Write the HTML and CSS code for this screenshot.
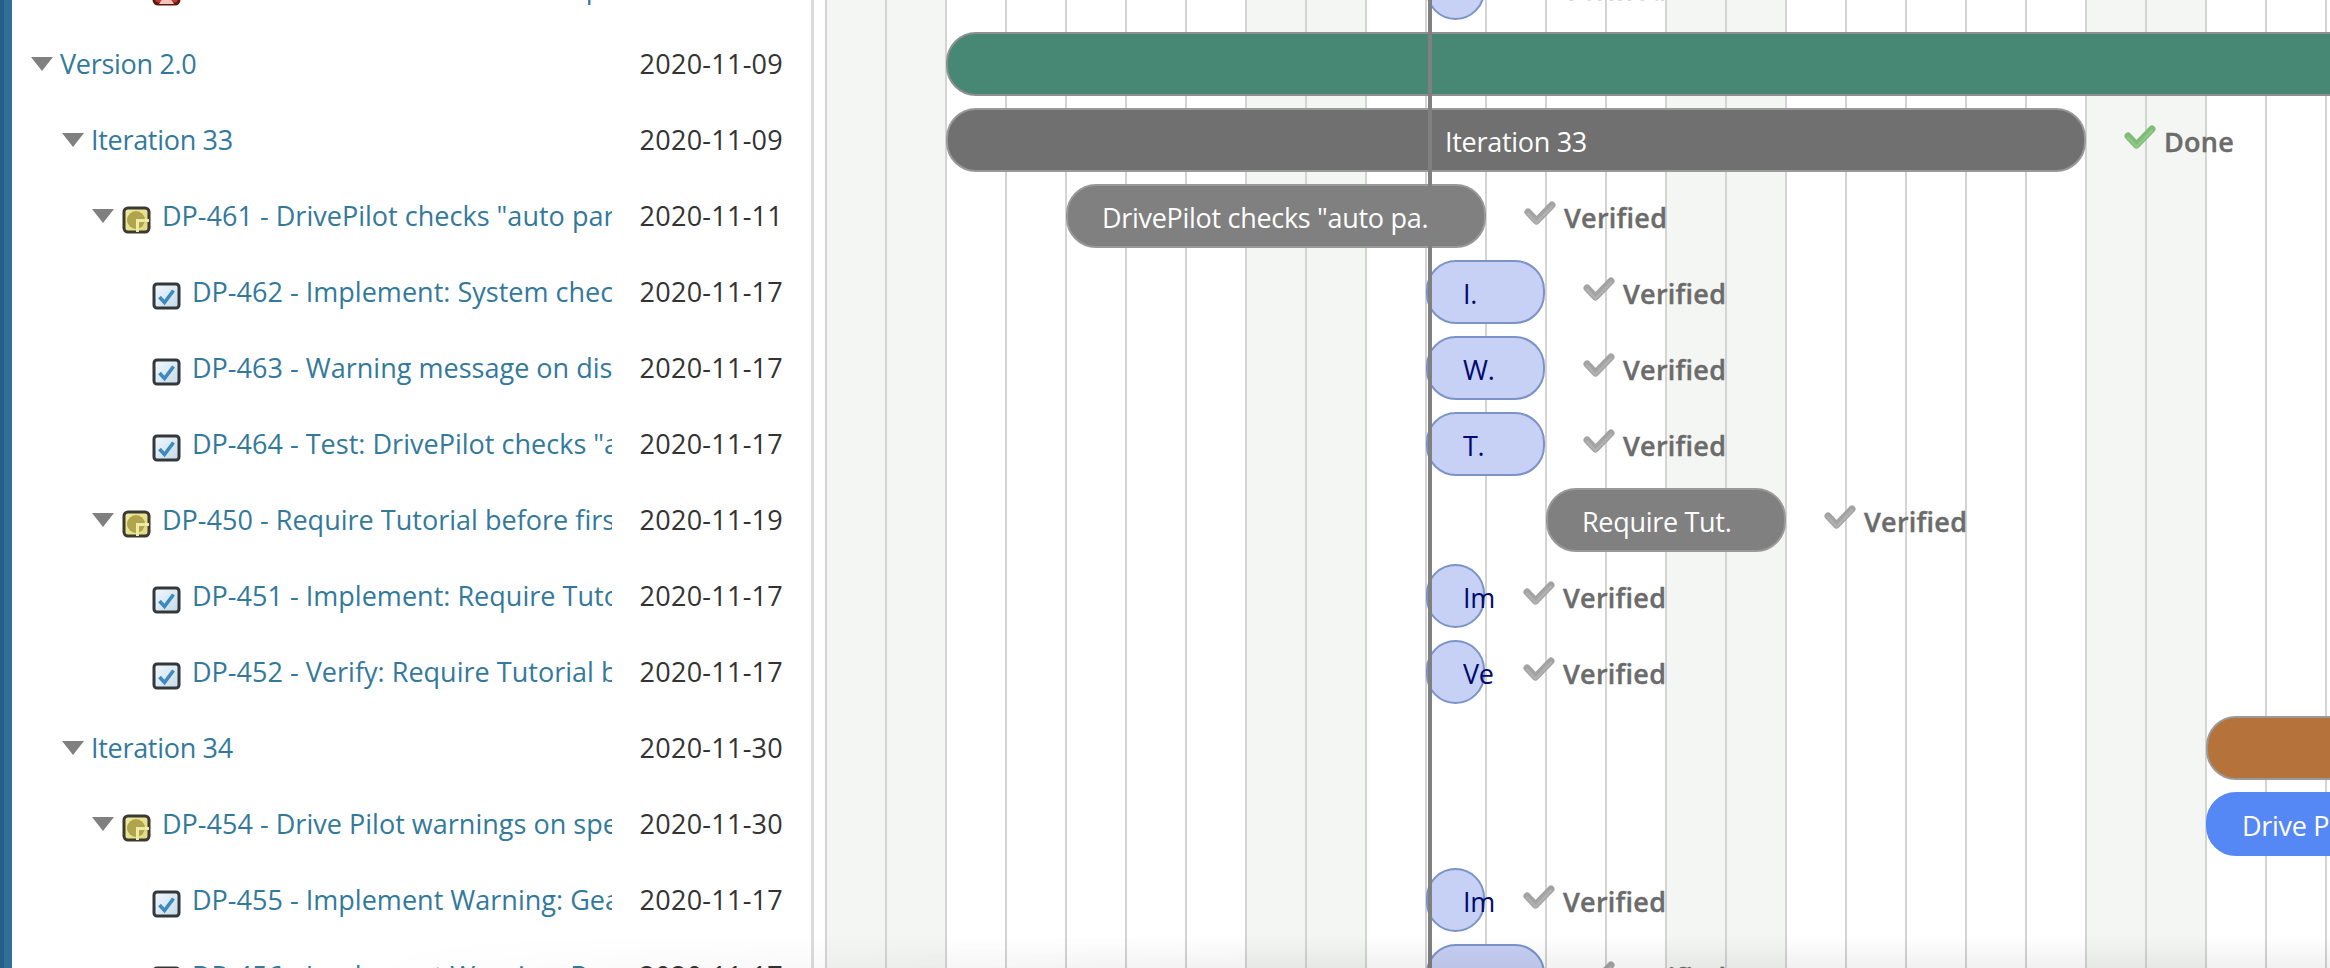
FILE: index.html
```html
<!DOCTYPE html>
<html lang="en">
<head>
<meta charset="utf-8">
<title>Gantt</title>
<link rel="stylesheet" href="styles.css">
</head>
<body>
<svg class="defs" width="0" height="0" aria-hidden="true">
  <defs>
    <linearGradient id="yel" x1="0" y1="0" x2="1" y2="1"><stop offset="0" stop-color="#f0eba4"/><stop offset="1" stop-color="#e0d87e"/></linearGradient>
    <linearGradient id="box" x1="0" y1="0" x2="1" y2="1"><stop offset="0" stop-color="#f2f8fc"/><stop offset="1" stop-color="#c4dbe9"/></linearGradient>
    <symbol id="ic-req" viewBox="0 0 29 28">
      <rect x="2" y="2" width="25" height="24" rx="4" fill="url(#yel)" stroke="#3a3a30" stroke-width="3"/>
      <circle cx="14" cy="14" r="9" fill="#b0a54c"/>
      <path d="M15.500 26V14.500H27" fill="none" stroke="#f0eba4" stroke-width="3"/>
    </symbol>
    <symbol id="ic-task" viewBox="0 0 29 28">
      <rect x="2" y="2" width="25" height="24" rx="3" fill="url(#box)" stroke="#34383c" stroke-width="3"/>
      <path d="M7.500 15l5 5.500 9-12" fill="none" stroke="#3e8abf" stroke-width="3.600"/>
    </symbol>
    <symbol id="ic-bug" viewBox="0 0 29 28">
      <rect x="2" y="2" width="25" height="24" rx="4" fill="#c33a30" stroke="#5a1a14" stroke-width="3"/>
      <path d="M7 26l7.500-11 7.500 11z" fill="#f3c4bc"/>
    </symbol>
    <symbol id="ic-check" viewBox="0 0 32 25">
      <path d="M4 12l8.500 9L28 5" fill="none" stroke="currentColor" stroke-width="7" stroke-linejoin="round" stroke-linecap="round"/>
      <path d="M4 12l8.500 9L28 5" fill="none" stroke="#fff" stroke-opacity=".16" stroke-width="2.500" stroke-linecap="round" transform="translate(0 1.500)"/>
    </symbol>
  </defs>
</svg>

<div class="page">
  <div class="rail"></div>

  <section class="tree">
    <div class="row lv3"><svg class="icon"><use href="#ic-bug"/></svg><a class="name">DP-449 - Alerts on Autoland stop</a><span class="date">2020-11-09</span></div>
    <div class="row lv0"><i class="tri"></i><a class="name tight">Version 2.0</a><span class="date">2020-11-09</span></div>
    <div class="row lv1"><i class="tri"></i><a class="name tight">Iteration 33</a><span class="date">2020-11-09</span></div>
    <div class="row lv2"><i class="tri"></i><svg class="icon"><use href="#ic-req"/></svg><a class="name">DP-461 - DrivePilot checks "auto parking" on start</a><span class="date">2020-11-11</span></div>
    <div class="row lv3"><svg class="icon"><use href="#ic-task"/></svg><a class="name">DP-462 - Implement: System checks status</a><span class="date">2020-11-17</span></div>
    <div class="row lv3"><svg class="icon"><use href="#ic-task"/></svg><a class="name">DP-463 - Warning message on display panel</a><span class="date">2020-11-17</span></div>
    <div class="row lv3"><svg class="icon"><use href="#ic-task"/></svg><a class="name">DP-464 - Test: DrivePilot checks "auto parking"</a><span class="date">2020-11-17</span></div>
    <div class="row lv2"><i class="tri"></i><svg class="icon"><use href="#ic-req"/></svg><a class="name">DP-450 - Require Tutorial before first use</a><span class="date">2020-11-19</span></div>
    <div class="row lv3"><svg class="icon"><use href="#ic-task"/></svg><a class="name">DP-451 - Implement: Require Tutorial first</a><span class="date">2020-11-17</span></div>
    <div class="row lv3"><svg class="icon"><use href="#ic-task"/></svg><a class="name">DP-452 - Verify: Require Tutorial before first use</a><span class="date">2020-11-17</span></div>
    <div class="row lv1"><i class="tri"></i><a class="name tight">Iteration 34</a><span class="date">2020-11-30</span></div>
    <div class="row lv2"><i class="tri"></i><svg class="icon"><use href="#ic-req"/></svg><a class="name">DP-454 - Drive Pilot warnings on speed limit</a><span class="date">2020-11-30</span></div>
    <div class="row lv3"><svg class="icon"><use href="#ic-task"/></svg><a class="name">DP-455 - Implement Warning: Gear shift</a><span class="date">2020-11-17</span></div>
    <div class="row lv3"><svg class="icon"><use href="#ic-task"/></svg><a class="name">DP-456 - Implement Warning: Brake pedal</a><span class="date">2020-11-17</span></div>
  </section>

  <section class="gantt">
    <div class="lane"><div class="bar task" style="margin-left:612px;width:59px"><span class="lbl short">Im</span></div><div class="status"><svg class="chk"><use href="#ic-check"/></svg><b>Verified</b></div></div>
    <div class="lane"><div class="bar version" style="margin-left:132px;width:1500px"></div></div>
    <div class="lane"><div class="bar done center" style="margin-left:132px;width:1140px"><span class="lbl">Iteration 33</span></div><div class="status ok"><svg class="chk"><use href="#ic-check"/></svg><b>Done</b></div></div>
    <div class="lane"><div class="bar req" style="margin-left:252px;width:420px"><span class="lbl">DrivePilot checks "auto pa.</span></div><div class="status"><svg class="chk"><use href="#ic-check"/></svg><b>Verified</b></div></div>
    <div class="lane"><div class="bar task" style="margin-left:612px;width:119px"><span class="lbl">I.</span></div><div class="status"><svg class="chk"><use href="#ic-check"/></svg><b>Verified</b></div></div>
    <div class="lane"><div class="bar task" style="margin-left:612px;width:119px"><span class="lbl">W.</span></div><div class="status"><svg class="chk"><use href="#ic-check"/></svg><b>Verified</b></div></div>
    <div class="lane"><div class="bar task" style="margin-left:612px;width:119px"><span class="lbl">T.</span></div><div class="status"><svg class="chk"><use href="#ic-check"/></svg><b>Verified</b></div></div>
    <div class="lane"><div class="bar req" style="margin-left:732px;width:240px"><span class="lbl">Require Tut.</span></div><div class="status"><svg class="chk"><use href="#ic-check"/></svg><b>Verified</b></div></div>
    <div class="lane"><div class="bar task" style="margin-left:612px;width:59px"><span class="lbl short">Implement</span></div><div class="status"><svg class="chk"><use href="#ic-check"/></svg><b>Verified</b></div></div>
    <div class="lane"><div class="bar task" style="margin-left:612px;width:59px"><span class="lbl short">Ve</span></div><div class="status"><svg class="chk"><use href="#ic-check"/></svg><b>Verified</b></div></div>
    <div class="lane"><div class="bar iter" style="margin-left:1392px;width:300px"></div></div>
    <div class="lane"><div class="bar active" style="margin-left:1392px;width:300px"><span class="lbl">Drive Pilot warnings</span></div></div>
    <div class="lane"><div class="bar task" style="margin-left:612px;width:59px"><span class="lbl short">Implement</span></div><div class="status"><svg class="chk"><use href="#ic-check"/></svg><b>Verified</b></div></div>
    <div class="lane"><div class="bar task" style="margin-left:612px;width:119px"><span class="lbl">I.</span></div><div class="status"><svg class="chk"><use href="#ic-check"/></svg><b>Verified</b></div></div>
    <div class="today"></div>
  </section>

  <div class="fade"></div>
</div>
</body>
</html>
```
FILE: styles.css
```css
* { box-sizing: border-box; }
html, body { margin: 0; height: 100%; overflow: hidden; background: #fff; }
body { font: 27px/38px "Open Sans", "Noto Sans", sans-serif; color: #333; }
.defs { position: absolute; }

.page { position: relative; display: flex; height: 968px; overflow: hidden; }

.rail {
  flex: 0 0 12px;
  background: linear-gradient(90deg, #245f8a 0 4px, #2f6f98 4px);
}

/* tree column */
.tree {
  flex: 0 0 802px;
  min-width: 0;
  margin-top: -50px;
  border-right: 3px solid #dcdcdc;
}
.row { display: flex; align-items: center; height: 76px; padding-right: 28px; }
.lv0 { padding-left: 19px; }
.lv1 { padding-left: 50px; }
.lv2 { padding-left: 80px; }
.lv3 { padding-left: 140px; }
.tri {
  flex: none;
  width: 0; height: 0;
  margin-right: 7px;
  border-style: solid;
  border-width: 14px 11px 0;
  border-color: #808080 transparent transparent;
}
.lv2 .tri { margin-right: 8px; }
.icon { flex: none; width: 29px; height: 28px; margin: 8px 11px 0 0; filter: blur(.4px); }
.name {
  flex: 1 1 0;
  min-width: 0;
  overflow: hidden;
  white-space: nowrap;
  color: #33799c;
  margin-right: 28px;
  letter-spacing: .02px;
}
.name.tight { letter-spacing: -.3px; }
.date { flex: none; color: #333; letter-spacing: .25px; }

/* chart */
.gantt {
  position: relative;
  flex: 1 1 0;
  min-width: 0;
  margin-top: -50px;
  height: 1100px;
  background:
    linear-gradient(90deg, #d4d4d4 2px, transparent 2px) 11px 0 / 60px 100%,
    linear-gradient(90deg, #f4f6f3 120px, transparent 120px) 11px 0 / 420px 100%,
    #fff;
}
.lane { display: flex; align-items: center; height: 76px; white-space: nowrap; }
.bar {
  flex: none;
  display: flex;
  align-items: center;
  height: 64px;
  padding-left: 34px;
  border: 2px solid #999;
  border-radius: 30px;
  color: #fff;
}
.bar .lbl { position: relative; top: 2px; white-space: nowrap; letter-spacing: -.3px; }
.center { justify-content: center; padding-left: 0; }
.version { background: #478875; border-color: #8f8f8f; }
.done { background: #707070; }
.req { background: #808080; }
.iter { background: #b5733b; }
.active { background: #5588f5; border-color: #5588f5; }
.task { padding-left: 35px; background: #c7d0f5; border-color: #7b93c8; color: #000a6e; }
.task .lbl.short { flex: none; width: 32px; overflow: hidden; }

.status {
  display: flex;
  align-items: center;
  margin-left: 38px;
  color: #6b6b6b;
}
.chk { flex: none; width: 32px; height: 25px; margin: -8px 8px 0 0; color: #a3a3a3; filter: blur(.5px); }
.status b {
  position: relative;
  top: 2px;
  font-weight: 600;
  letter-spacing: .25px;
  -webkit-text-stroke: .4px #6b6b6b;
}
.ok .chk { color: #7dbd74; }

.today {
  position: absolute;
  top: 0; bottom: 0;
  left: 614px;
  width: 4px;
  background: #808080;
}

.fade {
  position: absolute;
  left: 12px; right: 0; bottom: 0;
  height: 32px;
  background: linear-gradient(180deg, transparent, rgba(0, 0, 0, .055));
  -webkit-mask-image: linear-gradient(90deg, transparent 15%, #000 55%);
  mask-image: linear-gradient(90deg, transparent 15%, #000 55%);
  pointer-events: none;
}
```
